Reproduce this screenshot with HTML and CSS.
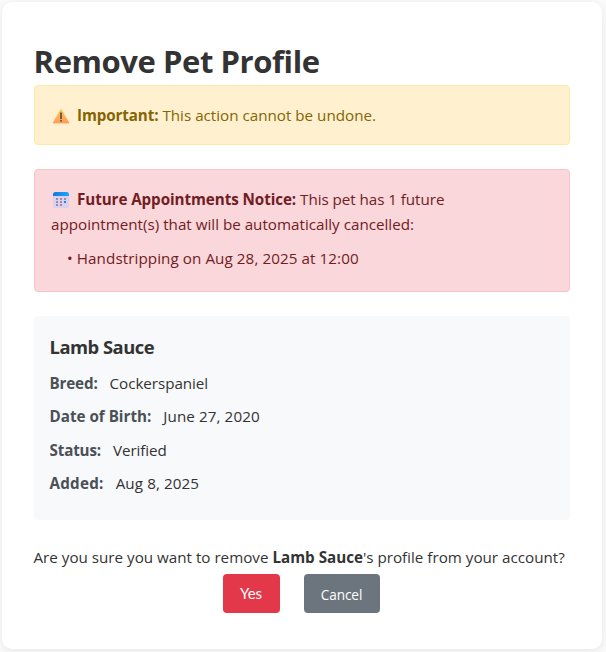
FILE: index.html
```html
<!DOCTYPE html>
<html lang="en">
<head>
<meta charset="utf-8">
<title>Remove Pet Profile</title>
<link rel="stylesheet" href="styles.css">
</head>
<body>
<main class="card">
  <h1 class="title">Remove Pet Profile</h1>
  <div class="alert alert-warning">
    <svg class="icon" viewBox="0 0 20 20"><defs><linearGradient id="w" x1="0" y1="0" x2="0" y2="1"><stop offset="0" stop-color="#ffc64d"/><stop offset="1" stop-color="#ff9d5c"/></linearGradient></defs><path d="M10 3.3 18 17H2Z" fill="url(#w)" stroke="url(#w)" stroke-width=".8" stroke-linejoin="round"/><path d="M10 7v5.4" stroke="#4a3c3c" stroke-width="1.5" stroke-linecap="round"/><circle cx="10" cy="14.8" r=".9" fill="#4a3c3c"/></svg>
    <strong class="s-important">Important:</strong> This action cannot be undone.
  </div>
  <div class="alert alert-danger">
    <svg class="icon" viewBox="0 0 20 20"><defs><linearGradient id="c" x1="0" y1="0" x2="1" y2="0"><stop offset="0" stop-color="#1b75dc"/><stop offset="1" stop-color="#15a9ff"/></linearGradient></defs><rect x="2" y="2" width="16" height="16" rx="2.5" fill="#dcd0ed"/><path d="M2 6V4.500A2.500 2.500 0 0 1 4.500 2h11A2.500 2.500 0 0 1 18 4.500V6Z" fill="url(#c)"/><g fill="#988da8"><rect x="5" y="8" width="2" height="2"/><rect x="9" y="8" width="2" height="2"/><rect x="13" y="8" width="2" height="2"/><rect x="5" y="11" width="2" height="2"/><rect x="9" y="11" width="2" height="2"/><rect x="5" y="14" width="2" height="2"/><rect x="9" y="14" width="2" height="2"/></g><rect x="13" y="11" width="2" height="2" fill="#1689ef"/></svg>
    <strong class="s-future">Future Appointments Notice:</strong> <span class="s-pet">This pet has 1 future</span><br>appointment(s) that will be automatically cancelled:
    <div class="item">• Handstripping on Aug 28, 2025 at 12:00</div>
  </div>
  <section class="details">
    <h2 class="name">Lamb Sauce</h2>
    <p class="row"><strong>Breed:</strong><span>Cockerspaniel</span></p>
    <p class="row"><strong class="wide">Date of Birth:</strong><span class="date">June 27, 2020</span></p>
    <p class="row"><strong>Status:</strong><span class="status">Verified</span></p>
    <p class="row"><strong class="added">Added:</strong><span class="date">Aug 8, 2025</span></p>
  </section>
  <p class="question">Are you sure you want to remove <strong>Lamb Sauce</strong>'s profile from your account?</p>
  <div class="actions"><button class="btn yes">Yes</button><a class="btn cancel">Cancel</a></div>
</main>
</body>
</html>
```
FILE: styles.css
```css
* { box-sizing: border-box; }
body { margin: 0; padding: 2px 4px 3px 2px; height: 652px; overflow: hidden; background: #fafafa; color: #333; font: 15.2px/25.6px "Open Sans", "Noto Sans", sans-serif; }
.card { height: 647px; padding: 32px; border-radius: 10px; background: #fff; box-shadow: 0 2px 10px rgba(0,0,0,.08); white-space: nowrap; }
h1, h2, p { margin: 0; }
.title { height: 51px; margin-left: -.4px; font-size: 31px; line-height: 54px; font-weight: 700; letter-spacing: -.43px; }
.alert { padding: 17px 16px 15px; border: 1px solid; border-radius: 4px; margin-bottom: 24px; }
.alert-warning { height: 60px; background: #fff1cf; border-color: #ffe8a1; color: #856404; }
.alert-danger { height: 123px; background: #f9d7da; border-color: #f8c2c9; color: #721c24; line-height: 25.4px; }
.icon { width: 20px; height: 20px; vertical-align: -5px; margin-right: 2px; }
.s-important { letter-spacing: -.1px; }
.s-future { letter-spacing: -.07px; }
.s-pet { letter-spacing: -.05px; }
.item { margin-top: 8px; padding-left: 16px; letter-spacing: .08px; }
.details { height: 204px; padding: 16px; border-radius: 4px; background: #f8f9fb; }
.name { font-size: 18.4px; line-height: 30px; margin: 0 0 9px -.5px; letter-spacing: -.5px; }
.row { display: flex; gap: 12px; margin-bottom: 8px; line-height: 25.4px; letter-spacing: -.05px; }
.row strong { color: #495057; letter-spacing: -.15px; margin-left: -.5px; }
.row .wide { letter-spacing: 0; }
.row .added { letter-spacing: .25px; }
.row .date { letter-spacing: .1px; }
.row .status { letter-spacing: -.1px; }
.question { margin: 25px 0 0 -.5px; height: 26px; }
.actions { display: flex; justify-content: center; gap: 24px; margin: 3px 1px 0 -1px; }
.btn { height: 39px; border: 0; border-radius: 4px; padding: 0; color: #fff; font: 13.6px/41px "Open Sans", sans-serif; text-align: center; }
.yes { width: 57px; background: #e3374a; font: 15px/37px Lato, sans-serif; padding-bottom: 1px; }
.cancel { width: 76px; background: #6c757d; letter-spacing: -.1px; }
```
